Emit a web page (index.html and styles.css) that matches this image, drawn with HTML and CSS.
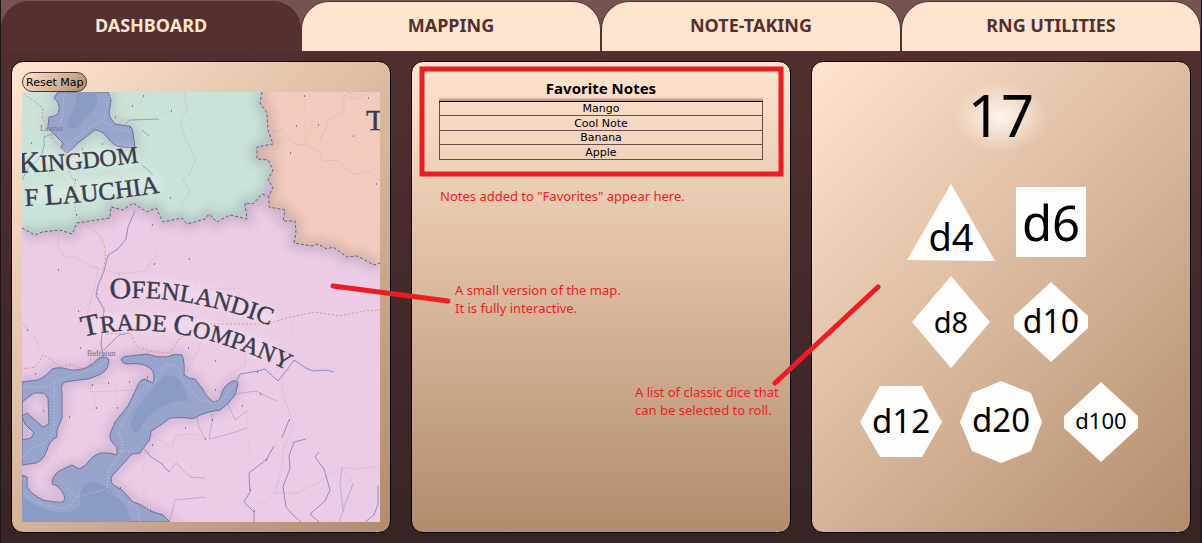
FILE: index.html
```html
<!DOCTYPE html>
<html lang="en">
<head>
<meta charset="utf-8">
<meta name="viewport" content="width=device-width, initial-scale=1">
<title>Dashboard</title>
<link rel="stylesheet" href="styles.css">
</head>
<body>
<nav class="tabs">
  <a class="tab tab-active" href="#dashboard" aria-current="page">DASHBOARD</a>
  <a class="tab" href="#mapping">MAPPING</a>
  <a class="tab" href="#notes">NOTE-TAKING</a>
  <a class="tab" href="#rng">RNG UTILITIES</a>
</nav>
<main class="panels">
  <section class="panel map-panel">
    <button class="reset" type="button">Reset Map</button>
    <svg class="map" viewBox="22 92 358 430" preserveAspectRatio="xMidYMid slice" role="img" aria-label="Campaign map">
      <defs>
        <filter id="soft" x="-20%" y="-20%" width="140%" height="140%"><feGaussianBlur stdDeviation="5"/></filter>
        <filter id="halo" x="-20%" y="-20%" width="140%" height="140%"><feGaussianBlur stdDeviation="4"/></filter>
        <path id="south" d="M22 228L35 235L42 232L60 230L72 234L77 223L110 218L111 207L123 210L133 203L147 212L156 208L163 222L182 218L187 224L205 219L209 214L217 222L230 215L247 219L245 203L253 204L262 194L268 196"/>
        <path id="east" d="M262 92L260 103L267 113L268 130L273 144L257 147L257 159L268 160L273 170L268 180L273 187L269 196L269 207L285 210L283 221L295 221L296 233L294 243L312 246L318 244L327 249L333 247L347 257L357 256L374 265L380 263"/>
        <path id="lake" d="M58 92L54 98Q60 103 59 110Q59 116 49 117L48 126Q50 131 53 133L63 143L61 148L67 153Q74 148 78 143L95 130Q103 131 107 137Q114 147 122 147L135 148L133 133Q132 126 128 126L115 124Q109 118 109 113L111 100L108 92Z"/>
        <path id="sea" d="M121 360Q122 356 130 356L147 354Q157 358 167 357Q174 353 182 355Q185 362 184 375Q189 379 195 379L202 388Q207 398 213 402Q219 402 221 396Q223 385 233 381Q238 380 238 384L235 395Q228 405 220 410Q210 411 200 415Q194 420 188 418Q179 417 170 418Q159 427 151 431Q150 442 147 443L140 453L132 454L112 476Q109 484 117 487L122 490L133 502Q144 505 150 511L163 515L170 522L22 522L22 475L27 477L27 487Q31 494 43 500Q57 503 63 502Q66 499 64 495Q60 486 52 484Q52 476 59 471L72 465L79 469L86 465Q92 455 101 453Q109 452 117 455L117 447Q109 441 110 434L115 422L128 406L137 387Q139 380 145 379L153 383Q156 373 150 368Q142 362 127 364Q122 363 121 360Z"/>
        <path id="inlet" fill-rule="evenodd" d="M22 382L37 380Q46 377 52 369Q60 366 70 370Q82 371 91 365L99 358Q106 355 109 360Q109 369 101 374Q90 380 79 380L65 382Q60 385 62 392L62 418L57 430L57 437Q49 441 47 450Q43 461 36 463L22 465ZM22 402L34 393L44 393L48 398L49 424L43 427L27 413L22 416ZM22 417L25 424L34 433L31 438L22 440Z"/>
      </defs>
      <rect x="22" y="92" width="358" height="430" fill="#ebcbe5"/>
      <path fill="#cae2d8" d="M22 92H262L260 103L267 113L268 130L273 144L257 147V159L268 160L273 170L268 180L263 194L253 204H245L247 219L230 215L217 222L209 214L205 219L187 224L182 218L163 222L156 208L147 212L133 203L123 210L111 207L110 218L77 223L72 234L60 230L42 232L35 235L22 228Z"/>
      <path fill="#f2cabe" d="M262 92L260 103L267 113L268 130L273 144L257 147L257 159L268 160L273 170L268 180L273 187L269 196L269 207L285 210L283 221L295 221L296 233L294 243L312 246L318 244L327 249L333 247L347 257L357 256L374 265L380 263V92Z"/>
      <g class="border-shade" filter="url(#soft)"><use href="#south"/><use href="#east"/></g>
      <g fill="none" stroke="#9987b0" stroke-width="8" opacity=".35" filter="url(#soft)"><use href="#lake"/><use href="#sea"/><use href="#inlet"/></g>
      <g fill="#98a4cb" stroke="#6e7396" stroke-width="1"><use href="#lake"/><use href="#sea"/><use href="#inlet"/></g>
      <path fill="#8b9bc5" d="M77 92H96Q99 105 92 111Q82 119 78 128Q69 130 67 124Q69 115 75 109ZM163 376Q176 373 182 384Q190 399 188 401Q176 399 158 409Q146 416 138 433Q132 435 131 423Q132 415 142 402ZM81 490Q88 477 103 485Q127 500 131 522H22V497Q45 514 70 512Q83 509 80 497Z"/>
      <g class="shore"><path d="M66 92Q61 101 64 112Q59 124 58 135L68 145L92 126L104 120L110 93M104 122L116 129L131 132"/><path d="M22 387L49 387L54 381Q75 375 94 369L107 360M54 382V430Q49 444 34 447L22 457M166 365L155 382Q142 388 136 397L119 431L123 449L108 470L107 489L75 497L60 480M166 364L178 366L183 381L200 401L220 403L234 385M22 492Q38 508 68 508L75 499M107 491L137 507L140 522M122 451L137 452"/></g>
      <g class="trail">
        <path d="M145 92L140 101L149 116M155 95Q143 91 140 106M67 168Q90 178 107 171L123 178L140 163M106 105L115 117L132 106M115 117L144 122L171 111M152 225V238L166 241L189 259L194 276L196 288M58 270Q75 276 82 288L99 291M152 239L159 255L154 265M80 311L104 290M300 110L286 108L270 117M305 96V121L307 139L318 125M290 153L306 140L297 126M307 139L313 121M353 136L364 147L380 157M292 323L290 345L279 369L260 395L247 406L248 432L250 457L266 460M92 385L96 408L69 417L60 437L54 467M116 408V382L146 376M96 384L109 383M267 460L281 435M205 439Q183 438 171 443L159 457L145 449M121 490L144 472L142 455M22 479H51M144 470L144 506L150 511"/>
      </g>
      <g class="region"><path d="M184 92L187 109L180 122L186 140L196 159L189 175L183 180L190 192L181 205M272 132L282 130L294 144L305 145L319 151L323 161L337 160L354 175L370 171L380 181M372 92L355 99L344 95V110L329 120L320 141M58 231V247L65 257L75 257L91 267L105 270L119 274L145 271L157 254M98 266L95 285L87 314M119 271V287L106 298M197 288L209 290L233 288L240 296L262 305L273 321M207 328L197 352L185 376M245 330L245 365L230 375M90 383L91 392L133 390M95 381L87 390M152 436L172 448L176 435L197 434L205 439M284 369L282 392L294 425L284 446L281 474L275 491L262 505L258 502M274 493L297 493L319 482L341 467L359 469L380 466M341 467L353 484L343 506M347 92L354 96M22 323L36 338L39 350"/></g>
      <g class="river">
        <path d="M135 211L128 227L126 239L118 249L108 255L104 271L98 285L96 296L104 309L101 345L104 358"/>
        <path d="M104 350L119 335L130 333M236 382L240 374L258 371L265 369L278 381L287 370L294 360L306 368L313 371L326 370L334 372M144 449L151 457L161 463L169 472"/>
        <path d="M289 420L282 438M306 439L294 442L289 456L290 468L283 487L286 507L295 517L301 522M319 452L315 457L324 469L330 490L325 501L310 514L319 522M274 446L266 460L249 473L250 492L244 502L254 512L254 522M378 486V504L374 515L365 522"/>
        <path opacity=".5" d="M169 472L176 463L190 477L205 478M212 413V422L209 439Q224 436 247 428M235 394L256 391L270 398L277 401M228 404L235 420L247 411M342 468L340 482L343 511L339 522M353 484L343 511M170 520L175 500L205 497M197 418L199 427L205 438"/>
        <path class="stream" d="M22 180L29 167Q47 156 44 137L52 134M125 124L130 120L159 119M142 130L149 136M142 165L153 175"/>
      </g>
      <g class="road"><path d="M24 94L43 108L42 118L51 131L53 140L66 152L70 174L75 182V211Q82 223 96 232Q109 244 104 266Q103 279 97 288Q97 299 104 308L102 334M107 334L130 333L137 347L154 352L170 353L180 338L205 324L232 324L268 324L286 318L315 312L340 316L363 311L380 310M102 350L91 355L89 368L79 368L70 364L60 367L50 359L43 355L36 367L22 369"/></g>
      <g fill="none" stroke="#66627b" stroke-width="1" stroke-dasharray="3 2"><use href="#south"/><use href="#east"/></g>
      <path class="dots" d="M143 96h1M132 106h1M115 117h1M171 111h1M130 127h1M31 143h1M102 144h1M82 149h1M304 96h1M368 98h1M318 125h1M296 126h1M353 136h1M290 153h1M376 184h1M75 180h1M170 198h1M76 215h1M58 270h1M152 225h1M189 259h1M154 264h1M78 311h1M27 330h1M80 348h1M188 348h1M215 361h1M35 374h1M92 385h1M108 383h1M129 382h1M147 377h1M96 408h1M117 408h1M69 417h1M215 390h1M257 372h1M260 394h1M242 406h1M212 420h1M185 428h1M205 439h1M152 445h1M289 420h1M266 460h1M250 490h1M254 511h1M150 510h1M120 488h1M43 411h1"/>
      <defs>
        <path id="k1" d="M19 173Q80 170 142 162"/>
        <path id="k2" d="M25 206Q95 203 170 191"/>
        <path id="o1" d="M110 299Q195 292 290 334"/>
        <path id="o2" d="M83 337Q180 312 310 382"/>
      </defs>
      <g class="place-glow" filter="url(#halo)"><path d="M118 290Q195 283 274 319M90 328Q180 308 276 355M26 163L136 155M30 195L160 183"/></g>
      <g class="place">
        <text><textPath href="#k1"><tspan class="cap">K</tspan>INGDOM</textPath></text>
        <text class="wide"><textPath href="#k2">F <tspan class="cap">L</tspan>AUCHIA</textPath></text>
        <text class="wide"><textPath href="#o1"><tspan class="cap">O</tspan>FENLANDIC</textPath></text>
        <text><textPath href="#o2"><tspan class="cap">T</tspan>RADE <tspan class="cap">C</tspan>OMPANY</textPath></text>
        <text x="366" y="130"><tspan class="cap">T</tspan></text>
      </g>
      <g class="town"><text x="40" y="131">Laurux</text><text x="87" y="356">Bolrotun</text></g>
    </svg>
  </section>
  <section class="panel notes-panel">
    <h2 class="notes-title" id="fav">Favorite Notes</h2>
    <table class="notes" aria-labelledby="fav">
      <tbody>
        <tr><td>Mango</td></tr>
        <tr><td>Cool Note</td></tr>
        <tr><td>Banana</td></tr>
        <tr><td>Apple</td></tr>
      </tbody>
    </table>
  </section>
  <section class="panel dice-panel">
    <output class="result">17</output>
    <div class="dice-row">
      <button class="die" type="button"><svg viewBox="901 172 100 100"><path d="M951 184L995 261L907 260Z"/><text x="951" y="251" font-size="38">d4</text></svg></button>
      <button class="die" type="button"><svg viewBox="1001 172 100 100"><path d="M1016 187H1086V257H1016Z"/><text x="1051" y="241" font-size="49">d6</text></svg></button>
    </div>
    <div class="dice-row">
      <button class="die" type="button"><svg viewBox="901 272 100 100"><path d="M951 276L990 322L951 368L912 322Z"/><text x="951" y="333" font-size="29">d8</text></svg></button>
      <button class="die" type="button"><svg viewBox="1001 272 100 100"><path d="M1051 282L1088 316V328L1051 362L1014 328V316Z"/><text x="1051" y="333" font-size="32">d10</text></svg></button>
    </div>
    <div class="dice-row">
      <button class="die" type="button"><svg viewBox="851 372 100 100"><path d="M880 386H922L942 422L922 457H880L860 422Z"/><text x="901" y="433" font-size="33">d12</text></svg></button>
      <button class="die" type="button"><svg viewBox="951 372 100 100"><path d="M1001 381L1031 393L1042 422L1031 451L1001 463L972 451L960 422L972 393Z"/><text x="1001" y="432" font-size="33">d20</text></svg></button>
      <button class="die" type="button"><svg viewBox="1051 372 100 100"><path d="M1101 382L1138 416V428L1101 462L1064 428V416Z"/><text x="1101" y="429" font-size="22">d100</text></svg></button>
    </div>
  </section>
</main>
<aside class="callouts">
  <svg class="marks" width="1202" height="543" aria-hidden="true">
    <rect x="422" y="69" width="359" height="105"/>
    <path d="M333 286L448 301M775 383L878 287"/>
  </svg>
  <p class="callout callout-notes">Notes added to "Favorites" appear here.</p>
  <p class="callout callout-map">A small version of the map.<br>It is fully interactive.</p>
  <p class="callout callout-dice">A list of classic dice that<br>can be selected to roll.</p>
</aside>
</body>
</html>
```

FILE: styles.css
```css
* { box-sizing: border-box; }

body {
  position: relative;
  display: flex;
  flex-direction: column;
  min-height: 100vh;
  margin: 0;
  border: solid #1c1517;
  border-width: 0 1px;
  background: linear-gradient(#553030, #382424);
  font-family: "DejaVu Sans", Verdana, sans-serif;
  font-size: 11px;
  color: #000;
}

.tabs {
  display: grid;
  grid-template-columns: repeat(4, 1fr);
  padding-top: 1px;
  background: #755351;
}

.tab {
  display: flex;
  align-items: center;
  justify-content: center;
  height: 50px;
  padding-bottom: 4px;
  border: 1px solid #553030;
  border-bottom: 0;
  border-radius: 28px 28px 0 0;
  background: #ffe4cf;
  color: #553030;
  font: bold 18px/24px "Noto Sans", "Open Sans", sans-serif;
  text-decoration: none;
}

.tab-active {
  background: #553030;
  color: #ffe4cf;
}

.panels {
  flex: 1;
  display: grid;
  grid-template-columns: repeat(3, 1fr);
  gap: 20px;
  padding: 10px;
}

.panel {
  display: flex;
  flex-direction: column;
  min-width: 0;
  border: 1px solid #000;
  border-radius: 12px;
  background: linear-gradient(135deg, #ffe4cf, #b28c6b);
}

.map-panel { padding: 10px; }

.reset {
  align-self: flex-start;
  height: 20px;
  padding: 0 3px;
  border: 1px solid #553030;
  border-radius: 10px;
  background: linear-gradient(135deg, #ffe4cf, #b28c6b);
  font: inherit;
  color: inherit;
}

.map {
  flex: 1;
  display: block;
  width: 100%;
  min-height: 0;
}

.border-shade { fill: none; stroke: #5c5468; stroke-width: 11; opacity: .2; }
.shore { fill: none; stroke: #cdd6ea; stroke-width: 1; stroke-dasharray: 1 2; opacity: .8; }
.trail { fill: none; stroke: #edb49f; stroke-width: 1; stroke-dasharray: 1 2; opacity: .8; }
.region { fill: none; stroke: #a797b1; stroke-width: 1; stroke-dasharray: 1 1; opacity: .45; }
.river { fill: none; stroke: #8d8fc2; stroke-width: 1; stroke-linejoin: round; }
.stream { stroke: #74b5b5; }
.road { fill: none; stroke: #e09878; stroke-width: 1; stroke-dasharray: 2 2; }
.dots { fill: none; stroke: #3b3846; stroke-width: 1; }
.place { fill: #3b3b4b; stroke: #3b3b4b; stroke-width: .4; font-family: "Liberation Serif", serif; font-size: 24px; }
.place .wide { font-size: 25px; }
.cap { font-size: 30px; }
.place-glow { fill: none; stroke: #fff; stroke-width: 18; opacity: .25; }
.town { fill: #77727f; font-family: "Liberation Serif", serif; font-size: 8px; }

.notes-panel {
  padding: 16px 27px;
  background: linear-gradient(#ffe4cf, #b28c6b);
}

.notes-title {
  margin: 0;
  padding-bottom: 3px;
  border-bottom: 1px solid #000;
  background: linear-gradient(transparent 19px, #a98a79) no-repeat;
  font: bold 15px/20px "Noto Sans", "Open Sans", sans-serif;
  text-align: center;
}

.notes {
  width: 100%;
  height: 58px;
  border-collapse: collapse;
}

.notes td {
  padding: 0;
  border: 1px solid #6d4c48;
  border-top: 0;
  line-height: 13px;
  text-align: center;
}

.dice-panel { align-items: center; }

.result {
  width: 94px;
  height: 110px;
  background: radial-gradient(47px 35px at 50% 50%, #fff5ec, transparent);
  font: 58px/106px "Noto Sans", "Open Sans", sans-serif;
  text-align: center;
}

.dice-row { display: flex; }

.die {
  width: 100px;
  height: 100px;
  padding: 0;
  border: 0;
  background: none;
}

.die svg { display: block; fill: #fffdfc; }
.die text {
  fill: #000;
  font-family: "Noto Sans", "Open Sans", sans-serif;
  text-anchor: middle;
}

.callouts { color: #ed1c24; pointer-events: none; }

.marks {
  position: absolute;
  top: 0;
  left: -1px;
  fill: none;
  stroke: #ed1c24;
  stroke-width: 5;
  stroke-linecap: round;
}

.callout {
  position: absolute;
  margin: 0;
  font: 13px/18px "Noto Sans", "Open Sans", sans-serif;
  white-space: nowrap;
}

.callout-notes { top: 187px; left: 439px; }
.callout-map { top: 281px; left: 454px; }
.callout-dice { top: 383px; left: 634px; }
```
